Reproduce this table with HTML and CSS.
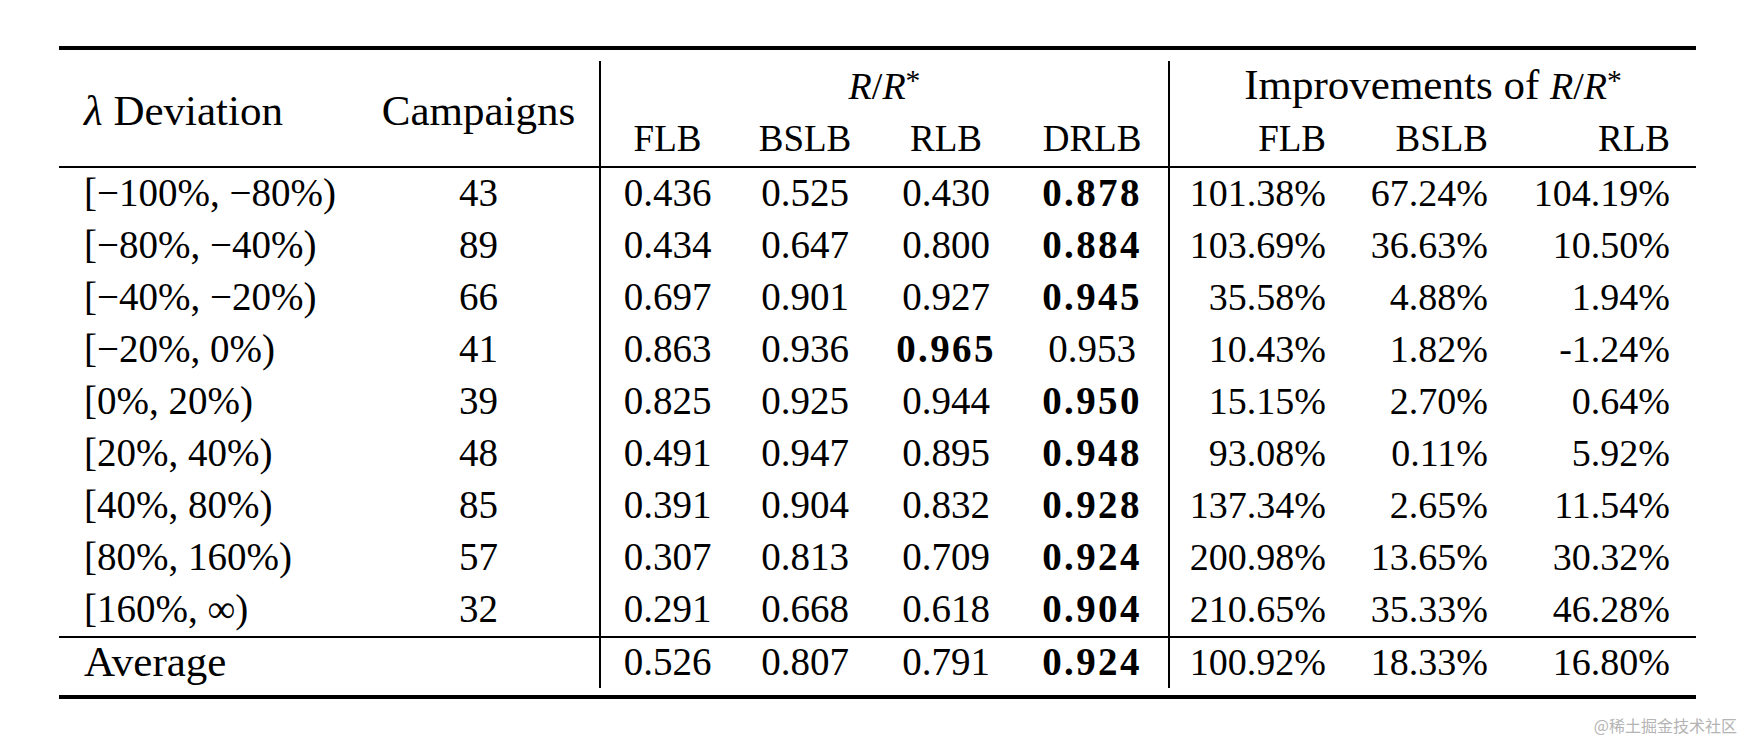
FILE: index.html
```html
<!DOCTYPE html>
<html lang="en">
<head>
<meta charset="utf-8">
<title>λ Deviation results</title>
<link rel="stylesheet" href="styles.css">
</head>
<body>
<div class="page">
  <div class="tbl-wrap">
    <table class="results">
      <colgroup>
        <col class="c-dev">
        <col class="c-camp">
        <col class="c-r1">
        <col class="c-r2">
        <col class="c-r3">
        <col class="c-r4">
        <col class="c-i1">
        <col class="c-i2">
        <col class="c-i3">
      </colgroup>
      <thead>
        <tr class="h1">
          <th rowspan="2" class="dev label"><i>λ</i> Deviation</th>
          <th rowspan="2" class="center label">Campaigns</th>
          <th colspan="4" class="center vsep math"><i>R</i>/<i>R</i><sup>*</sup></th>
          <th colspan="3" class="center vsep label">Improvements of <span class="math"><i>R</i>/<i>R</i><sup>*</sup></span></th>
        </tr>
        <tr class="h2">
          <th class="center vsep cap">FLB</th>
          <th class="center cap">BSLB</th>
          <th class="center cap">RLB</th>
          <th class="center cap">DRLB</th>
          <th class="right vsep cap">FLB</th>
          <th class="right cap">BSLB</th>
          <th class="right cap">RLB</th>
        </tr>
      </thead>
      <tbody>
        <tr><td class="dev">[−100%, −80%)</td><td class="center">43</td><td class="center vsep">0.436</td><td class="center">0.525</td><td class="center">0.430</td><td class="center"><b>0.878</b></td><td class="right vsep">101.38%</td><td class="right">67.24%</td><td class="right">104.19%</td></tr>
        <tr><td class="dev">[−80%, −40%)</td><td class="center">89</td><td class="center vsep">0.434</td><td class="center">0.647</td><td class="center">0.800</td><td class="center"><b>0.884</b></td><td class="right vsep">103.69%</td><td class="right">36.63%</td><td class="right">10.50%</td></tr>
        <tr><td class="dev">[−40%, −20%)</td><td class="center">66</td><td class="center vsep">0.697</td><td class="center">0.901</td><td class="center">0.927</td><td class="center"><b>0.945</b></td><td class="right vsep">35.58%</td><td class="right">4.88%</td><td class="right">1.94%</td></tr>
        <tr><td class="dev">[−20%, 0%)</td><td class="center">41</td><td class="center vsep">0.863</td><td class="center">0.936</td><td class="center"><b>0.965</b></td><td class="center">0.953</td><td class="right vsep">10.43%</td><td class="right">1.82%</td><td class="right">-1.24%</td></tr>
        <tr><td class="dev">[0%, 20%)</td><td class="center">39</td><td class="center vsep">0.825</td><td class="center">0.925</td><td class="center">0.944</td><td class="center"><b>0.950</b></td><td class="right vsep">15.15%</td><td class="right">2.70%</td><td class="right">0.64%</td></tr>
        <tr><td class="dev">[20%, 40%)</td><td class="center">48</td><td class="center vsep">0.491</td><td class="center">0.947</td><td class="center">0.895</td><td class="center"><b>0.948</b></td><td class="right vsep">93.08%</td><td class="right">0.11%</td><td class="right">5.92%</td></tr>
        <tr><td class="dev">[40%, 80%)</td><td class="center">85</td><td class="center vsep">0.391</td><td class="center">0.904</td><td class="center">0.832</td><td class="center"><b>0.928</b></td><td class="right vsep">137.34%</td><td class="right">2.65%</td><td class="right">11.54%</td></tr>
        <tr><td class="dev">[80%, 160%)</td><td class="center">57</td><td class="center vsep">0.307</td><td class="center">0.813</td><td class="center">0.709</td><td class="center"><b>0.924</b></td><td class="right vsep">200.98%</td><td class="right">13.65%</td><td class="right">30.32%</td></tr>
        <tr class="last"><td class="dev">[160%, ∞)</td><td class="center">32</td><td class="center vsep">0.291</td><td class="center">0.668</td><td class="center">0.618</td><td class="center"><b>0.904</b></td><td class="right vsep">210.65%</td><td class="right">35.33%</td><td class="right">46.28%</td></tr>
      </tbody>
      <tfoot>
        <tr class="avg"><td class="dev label">Average</td><td class="center"></td><td class="center vsep">0.526</td><td class="center">0.807</td><td class="center">0.791</td><td class="center"><b>0.924</b></td><td class="right vsep">100.92%</td><td class="right">18.33%</td><td class="right">16.80%</td></tr>
      </tfoot>
    </table>
  </div>
  <div class="watermark">@稀土掘金技术社区</div>
</div>
</body>
</html>
```

FILE: styles.css
```css
html, body {
  margin: 0;
  padding: 0;
  background: #ffffff;
}

.page {
  width: 1748px;
  height: 742px;
  padding: 46px 0 0 59px;
  box-sizing: border-box;
  font-family: "Liberation Serif", "Times New Roman", serif;
  color: #000;
  position: relative;
}

.tbl-wrap {
  width: 1637px;
  border-top: 4px solid #000;
  border-bottom: 4px solid #000;
  padding: 11px 0 7px;
}

.results {
  width: 1637px;
  table-layout: fixed;
  border-collapse: separate;
  border-spacing: 0;
  font-size: 38px;
}

.c-dev { width: 299px; }
.c-camp { width: 241px; }
.c-r1 { width: 135px; }
.c-r2 { width: 142px; }
.c-r3 { width: 140px; }
.c-r4 { width: 152px; }
.c-i1 { width: 184px; }
.c-i2 { width: 162px; }
.c-i3 { width: 182px; }

.results th,
.results td {
  padding: 0 0 2px;
  font-weight: 400;
  line-height: 50px;
  white-space: nowrap;
  vertical-align: middle;
}

.results td.dev,
.results td.center {
  font-size: 39px;
}

.results th.cap {
  font-size: 37px;
}

.results .h1 th {
  line-height: 48px;
  padding-bottom: 4px;
}

.results .h1 th[rowspan] {
  padding-bottom: 6px;
}

.results .label,
.results .h1 th.label,
.results td.label {
  font-size: 43px;
}

.results .math,
.results .h1 th.math {
  font-size: 38px;
}

.results b {
  font-weight: 700;
  letter-spacing: 0.06em;
}

.results sup {
  font-size: 0.78em;
  line-height: 0;
  vertical-align: 0.32em;
}

.dev {
  text-align: left;
  padding-left: 25px !important;
}

.center {
  text-align: center;
}

.right {
  text-align: right;
  padding-right: 26px !important;
}

.vsep {
  border-left: 2px solid #000;
}

.h2 th {
  border-bottom: 2px solid #000;
}

.h1 th[rowspan] {
  border-bottom: 2px solid #000;
}

.last td {
  border-bottom: 2px solid #000;
}

.results .avg td {
  line-height: 48px;
  padding-bottom: 2px;
}

.watermark {
  position: absolute;
  right: 11px;
  top: 715px;
  font-family: "Noto Sans CJK SC", "Noto Sans", sans-serif;
  font-size: 16px;
  line-height: 20px;
  color: #b4b4b4;
}
```
